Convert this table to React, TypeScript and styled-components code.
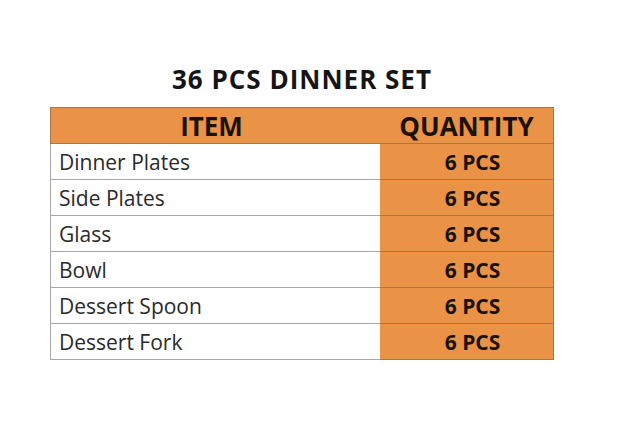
import React from 'react'
import styled, { createGlobalStyle } from 'styled-components'

const GlobalStyle = createGlobalStyle`
  html, body {
    margin: 0;
    padding: 0;
    background: #ffffff;
  }
  body {
    font-family: 'Open Sans', 'Liberation Sans', sans-serif;
    color: #1a1a1a;
  }
`

const items = [
  'Dinner Plates',
  'Side Plates',
  'Glass',
  'Bowl',
  'Dessert Spoon',
  'Dessert Fork',
]

const App: React.FC = () => {
  return (
    <>
      <GlobalStyle />
      <StyledPage>
        <StyledSheet>
          <StyledTitle>36 PCS DINNER SET</StyledTitle>
          <StyledTable>
            <StyledHeadCell>ITEM</StyledHeadCell>
            <StyledHeadCell>QUANTITY</StyledHeadCell>
            {items.map((item) => (
              <React.Fragment key={item}>
                <StyledItemCell>{item}</StyledItemCell>
                <StyledQtyCell>6 PCS</StyledQtyCell>
              </React.Fragment>
            ))}
          </StyledTable>
        </StyledSheet>
      </StyledPage>
    </>
  )
}

const StyledPage = styled.div`
  width: 628px;
  height: 424px;
  box-sizing: border-box;
  padding: 61px 0 0 50px;
`

const StyledSheet = styled.div`
  width: 504px;
  display: flex;
  flex-direction: column;
  align-items: center;
`

const StyledTitle = styled.div`
  font-size: 26px;
  font-weight: 700;
  letter-spacing: 1px;
  line-height: 36px;
  color: #151515;
  margin-bottom: 10px;
`

const StyledTable = styled.div`
  width: 504px;
  display: grid;
  grid-template-columns: 330px 174px;
  grid-auto-rows: 36px;
  border-top: 1px solid #a9754c;
`

const StyledHeadCell = styled.div`
  background: #ea9246;
  border-bottom: 1px solid #a9754c;
  font-size: 26px;
  font-weight: 700;
  color: #1a1208;
  display: flex;
  align-items: center;
  justify-content: center;
  &:first-child {
    border-left: 1px solid #a9754c;
    padding-right: 8px;
  }
  &:nth-child(2) {
    border-right: 1px solid #a9754c;
  }
`

const StyledItemCell = styled.div`
  border-left: 1px solid #a8a8a8;
  border-bottom: 1px solid #a8a8a8;
  font-size: 21px;
  color: #2a2a2a;
  display: flex;
  align-items: center;
  padding-left: 8px;
`

const StyledQtyCell = styled.div`
  background: #ea9246;
  border-bottom: 1px solid #a9754c;
  border-right: 1px solid #a9754c;
  font-size: 21px;
  font-weight: 700;
  color: #1a1208;
  display: flex;
  align-items: center;
  justify-content: center;
  padding-left: 12px;
`

export default App
